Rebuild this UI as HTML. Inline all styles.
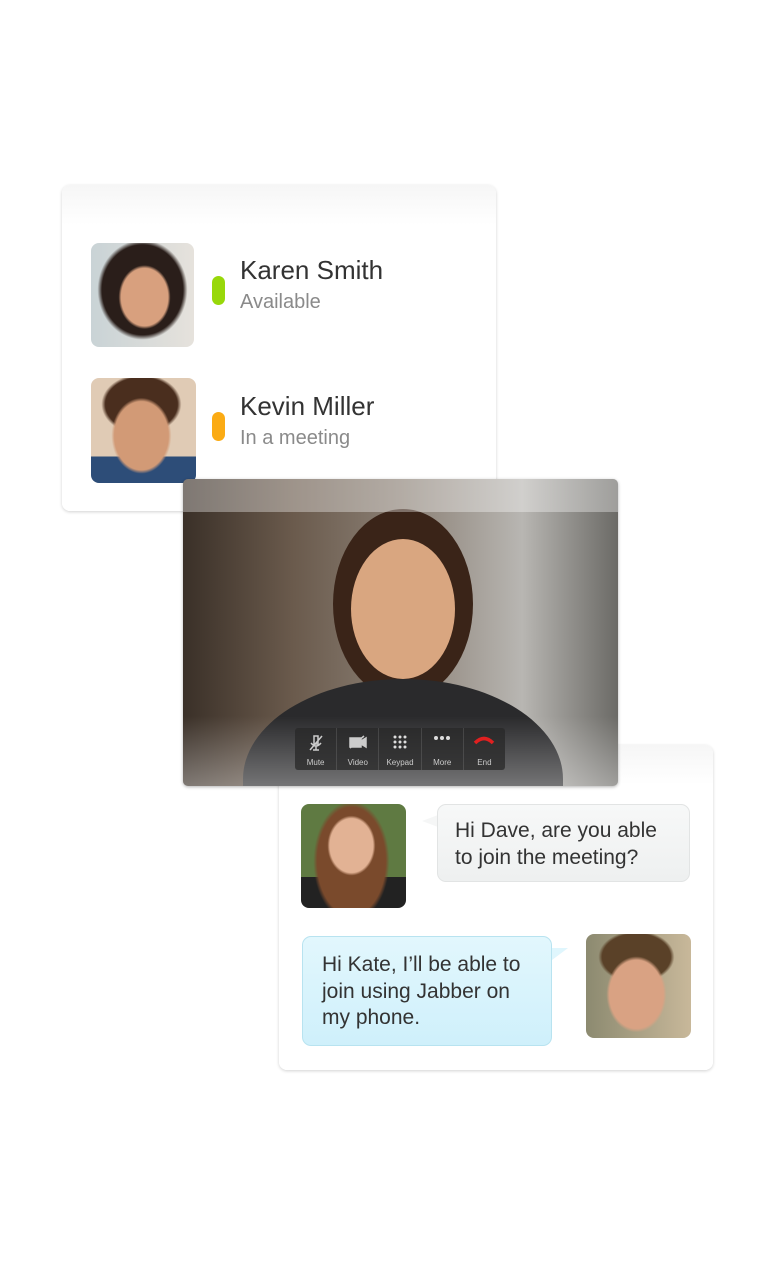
<!DOCTYPE html>
<html><head><meta charset="utf-8"><style>
*{margin:0;padding:0;box-sizing:border-box}
body{width:768px;height:1280px;background:#fff;position:relative;overflow:hidden;font-family:"Liberation Sans",sans-serif}
.card{position:absolute;background:#fff;border-radius:8px;box-shadow:0 1px 3px rgba(0,0,0,.18)}
.ph{position:absolute;border-radius:8px;overflow:hidden}
.pill{position:absolute;width:13px;height:29px;border-radius:7px}
.name{position:absolute;font-size:26px;color:#333}
.st{position:absolute;font-size:20px;color:#8a8a8a}
.bub{position:absolute;border-radius:9px;font-size:21px;color:#333;line-height:26.5px}
.tb{position:absolute;left:295px;top:728px;width:210px;height:42px;background:rgba(40,40,40,.75);border-radius:3px;display:flex}
.tb div{flex:1;border-right:1px solid rgba(255,255,255,.12);color:#ccc;font-size:8px;text-align:center;padding-top:30px;position:relative}
.tb div:last-child{border:none}
.tb svg{position:absolute;left:50%;top:7px;transform:translateX(-50%)}
</style></head><body>
<div class="card" style="left:62px;top:185px;width:434px;height:326px;background:linear-gradient(#f6f6f6,#fff 40px)"></div>
<div class="ph" style="left:91px;top:243px;width:103px;height:104px;background:radial-gradient(ellipse 26px 32px at 52% 52%,#d8a07e 90%,transparent 100%),radial-gradient(ellipse 45px 50px at 50% 45%,#2a1e1a 90%,transparent 100%),linear-gradient(90deg,#c9d3d6,#e6e2dc)"></div>
<div class="pill" style="left:212px;top:276px;background:#98d80a"></div>
<div class="name" style="left:240px;top:255px">Karen Smith</div>
<div class="st" style="left:240px;top:291px">Available</div>
<div class="ph" style="left:91px;top:378px;width:105px;height:105px;background:radial-gradient(ellipse 30px 38px at 48% 55%,#d29a76 90%,transparent 100%),radial-gradient(ellipse 40px 30px at 48% 25%,#4a2e1e 90%,transparent 100%),linear-gradient(#e0cbb5 75%,#2d4d78 75%)"></div>
<div class="pill" style="left:212px;top:412px;background:#fbab14"></div>
<div class="name" style="left:240px;top:391px">Kevin Miller</div>
<div class="st" style="left:240px;top:427px">In a meeting</div>

<div class="card" style="left:279px;top:745px;width:434px;height:325px;background:linear-gradient(#f6f6f6,#fff 40px)"></div>

<div style="position:absolute;left:183px;top:479px;width:435px;height:307px;border-radius:5px;overflow:hidden;box-shadow:0 1px 3px rgba(0,0,0,.3);background:linear-gradient(90deg,#3a3028 0%,#6a5a4c 25%,#8a7f74 50%,#b8b6b2 78%,#6b6a66 100%)">
 <div style="position:absolute;left:150px;top:30px;width:140px;height:190px;border-radius:50%;background:#3a2418"></div>
 <div style="position:absolute;left:168px;top:60px;width:104px;height:140px;border-radius:50%;background:#d9a680"></div>
 <div style="position:absolute;left:60px;top:200px;width:320px;height:200px;border-radius:50% 50% 0 0;background:#2a2a2c"></div>
 <div style="position:absolute;left:0;top:0;width:435px;height:33px;background:rgba(255,255,255,.35)"></div>
 <div style="position:absolute;left:0;bottom:0;width:435px;height:70px;background:linear-gradient(transparent,rgba(255,255,255,.35))"></div>
</div>
<div class="tb">
<div><svg width="14" height="16"><path d="M5 1h4v8H5zM2 8q5 6 10 0M7 11v4M4 15h6M1 15L13 1" stroke="#ccc" stroke-width="1.5" fill="none"/></svg>Mute</div>
<div><svg width="18" height="14"><path d="M1 3h11v9H1zM12 6l5-3v9l-5-3M1 13L15 1" stroke="#ccc" stroke-width="1.5" fill="#ccc"/></svg>Video</div>
<div><svg width="16" height="14" fill="#ddd"><circle cx="3" cy="2" r="1.5"/><circle cx="8" cy="2" r="1.5"/><circle cx="13" cy="2" r="1.5"/><circle cx="3" cy="7" r="1.5"/><circle cx="8" cy="7" r="1.5"/><circle cx="13" cy="7" r="1.5"/><circle cx="3" cy="12" r="1.5"/><circle cx="8" cy="12" r="1.5"/><circle cx="13" cy="12" r="1.5"/></svg>Keypad</div>
<div><svg width="18" height="6" fill="#ddd"><circle cx="3" cy="3" r="2"/><circle cx="9" cy="3" r="2"/><circle cx="15" cy="3" r="2"/></svg>More</div>
<div><svg width="22" height="10"><path d="M2 8q9-9 18 0" stroke="#e02020" stroke-width="3.5" fill="none"/></svg>End</div>
</div>

<div class="ph" style="left:301px;top:804px;width:105px;height:104px;background:radial-gradient(ellipse 24px 30px at 48% 40%,#e2b294 90%,transparent 100%),radial-gradient(ellipse 38px 60px at 48% 55%,#7a4a2c 90%,transparent 100%),linear-gradient(#5f7a42 70%,#222 70%)"></div>
<svg style="position:absolute;left:422px;top:815px" width="18" height="12"><path d="M0 6L16 0V12z" fill="#f5f6f6"/></svg>
<div class="bub" style="left:437px;top:804px;width:253px;height:78px;background:linear-gradient(#f7f8f8,#eef0f0);border:1px solid #e2e4e4;padding:13px 10px 0 17px">Hi Dave, are you able to join the meeting?</div>
<svg style="position:absolute;left:550px;top:948px" width="18" height="12"><path d="M0 0H18L2 12z" fill="#dff6fd"/></svg>
<div class="bub" style="left:302px;top:936px;width:250px;height:110px;background:linear-gradient(#e2f7fd,#cff0fb);border:1px solid #b8e3f0;padding:15px 18px 0 19px">Hi Kate, I’ll be able to join using Jabber on my phone.</div>
<div class="ph" style="left:586px;top:934px;width:105px;height:104px;background:radial-gradient(ellipse 30px 38px at 48% 58%,#d9a283 90%,transparent 100%),radial-gradient(ellipse 38px 26px at 48% 22%,#5a4128 90%,transparent 100%),linear-gradient(90deg,#8c8a70,#c8b89a)"></div>
</body></html>
